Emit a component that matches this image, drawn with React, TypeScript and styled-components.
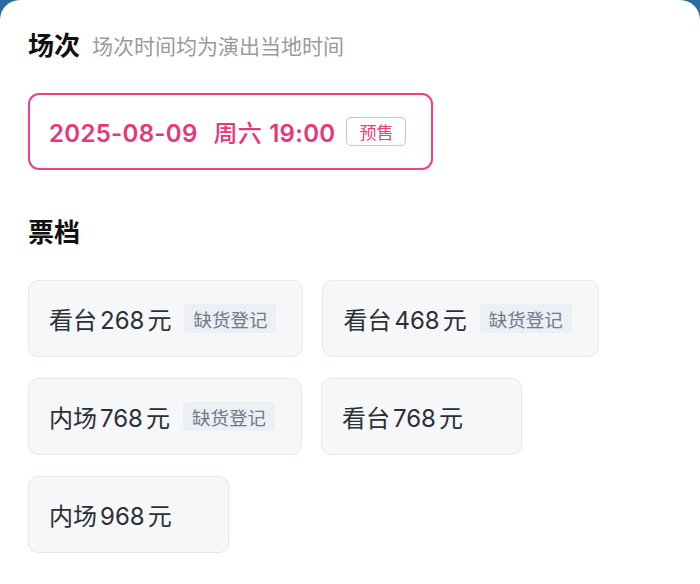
import styled, { createGlobalStyle } from "styled-components";

const tickets = [
  { area: "看台", price: 268, soldOut: true },
  { area: "看台", price: 468, soldOut: true },
  { area: "内场", price: 768, soldOut: true },
  { area: "看台", price: 768, soldOut: false },
  { area: "内场", price: 968, soldOut: false },
];

const GlobalStyle = createGlobalStyle`
  html, body {
    margin: 0;
    padding: 0;
    background: #2c6c9f;
    font-family: Inter, "Noto Sans CJK SC", sans-serif;
  }
`;

const App = () => {
  return (
    <>
      <GlobalStyle />
      <Sheet>
        <HeaderRow>
          <SectionTitle>场次</SectionTitle>
          <SubTitle>场次时间均为演出当地时间</SubTitle>
        </HeaderRow>

        <SessionBox>
          <SessionText>
            2025-08-09<Weekday>周六</Weekday>19:00
          </SessionText>
          <PresaleTag>预售</PresaleTag>
        </SessionBox>

        <TicketTitle>票档</TicketTitle>
        <TicketList>
          {tickets.map((ticket, index) => (
            <TicketCard key={index}>
              <TicketLabel>
                <Part>{ticket.area}</Part>
                <Part>{ticket.price}</Part>
                <span>元</span>
              </TicketLabel>
              {ticket.soldOut && <SoldOutTag>缺货登记</SoldOutTag>}
            </TicketCard>
          ))}
        </TicketList>
      </Sheet>
    </>
  );
};

export default App;

const Sheet = styled.div`
  background: #ffffff;
  border-radius: 20px 20px 0 0;
  min-height: 584px;
  box-sizing: border-box;
  padding: 30px 28px 28px;
`;

const HeaderRow = styled.div`
  display: flex;
  align-items: center;
  gap: 12px;
  height: 32px;
`;

const SectionTitle = styled.h2`
  margin: 0;
  font-size: 26px;
  line-height: 32px;
  font-weight: 700;
  color: #111111;
`;

const SubTitle = styled.span`
  font-size: 21px;
  line-height: 32px;
  color: #9a9a9a;
  margin-top: 1px;
`;

const SessionBox = styled.div`
  display: inline-flex;
  align-items: center;
  gap: 11px;
  margin-top: 31px;
  height: 77px;
  box-sizing: border-box;
  padding: 0 25px 0 19px;
  border: 2px solid #ef3f86;
  border-radius: 11px;
`;

const SessionText = styled.span`
  font-size: 24px;
  font-weight: 600;
  color: #e8357b;
  letter-spacing: 0.3px;
  white-space: nowrap;
`;

const Weekday = styled.span`
  margin: 0 7px 0 16px;
  font-weight: 500;
`;

const PresaleTag = styled.span`
  display: inline-flex;
  align-items: center;
  height: 29px;
  box-sizing: border-box;
  padding: 0 12px;
  border: 1px solid #f2b3c9;
  border-radius: 5px;
  font-size: 17px;
  color: #e2407f;
`;

const TicketTitle = styled.h2`
  margin: 47px 0 0;
  font-size: 26px;
  line-height: 32px;
  font-weight: 700;
  color: #111111;
`;

const TicketList = styled.div`
  display: flex;
  flex-wrap: wrap;
  column-gap: 19px;
  row-gap: 21px;
  margin-top: 31px;
`;

const TicketCard = styled.div`
  display: flex;
  align-items: center;
  gap: 13px;
  height: 77px;
  min-width: 201px;
  box-sizing: border-box;
  padding: 0 26px 0 20px;
  background: #f6f7f9;
  border: 1px solid #e6e8eb;
  border-radius: 10px;
`;

const TicketLabel = styled.span`
  font-size: 24px;
  color: #2b2f36;
  white-space: nowrap;
`;

const Part = styled.span`
  margin-right: 3px;
`;

const SoldOutTag = styled.span`
  display: inline-flex;
  align-items: center;
  height: 29px;
  padding: 0 9px;
  border-radius: 4px;
  background: #eceff4;
  font-size: 18.5px;
  color: #6f7a8a;
  white-space: nowrap;
`;
